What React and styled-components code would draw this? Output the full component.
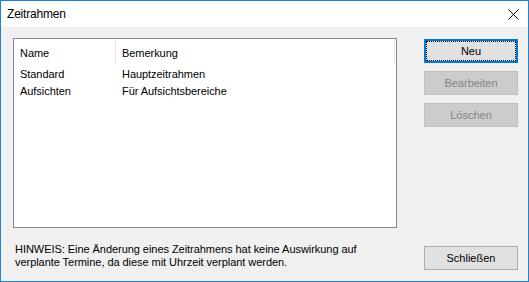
import styled, { createGlobalStyle } from "styled-components";

const GlobalStyle = createGlobalStyle`
  html, body {
    margin: 0;
    padding: 0;
    background: #ffffff;
  }
  * {
    box-sizing: border-box;
  }
`;

const rows = [
  { name: "Standard", note: "Hauptzeitrahmen" },
  { name: "Aufsichten", note: "Für Aufsichtsbereiche" },
];

export default function App() {
  return (
    <>
      <GlobalStyle />
      <Window>
        <TitleBar>
          <Title>Zeitrahmen</Title>
          <CloseButton aria-label="Schließen">
            <svg width="11" height="11" viewBox="0 0 11 11">
              <path d="M0.5 0.5 L10.5 10.5 M10.5 0.5 L0.5 10.5" stroke="#000" strokeWidth="1" />
            </svg>
          </CloseButton>
        </TitleBar>
        <Body>
          <MainRow>
            <ListBox>
              <HeaderRow>
                <HeaderCell $width={102}>Name</HeaderCell>
                <HeaderCell $width={276}>Bemerkung</HeaderCell>
              </HeaderRow>
              {rows.map((row) => (
                <ItemRow key={row.name}>
                  <Cell $width={102}>{row.name}</Cell>
                  <Cell $width={276}>{row.note}</Cell>
                </ItemRow>
              ))}
            </ListBox>
            <ButtonColumn>
              <Button $focused>
                <FocusRect>Neu</FocusRect>
              </Button>
              <Button disabled>Bearbeiten</Button>
              <Button disabled>Löschen</Button>
            </ButtonColumn>
          </MainRow>
          <FooterRow>
            <Hint>
              HINWEIS: Eine Änderung eines Zeitrahmens hat keine Auswirkung auf
              <br />
              verplante Termine, da diese mit Uhrzeit verplant werden.
            </Hint>
            <Button>Schließen</Button>
          </FooterRow>
        </Body>
      </Window>
    </>
  );
}

const Window = styled.div`
  width: 529px;
  height: 282px;
  border: 1px solid #1883d7;
  background: #f0f0f0;
  display: flex;
  flex-direction: column;
  font-family: "Liberation Sans", Arial, sans-serif;
  font-size: 11px;
  letter-spacing: -0.05px;
  color: #000000;
`;

const TitleBar = styled.div`
  height: 26px;
  background: #ffffff;
  display: flex;
  align-items: center;
  justify-content: space-between;
  padding: 0 0 0 6px;
`;

const Title = styled.span`
  font-size: 12px;
  letter-spacing: -0.2px;
  color: #000000;
`;

const CloseButton = styled.div`
  width: 30px;
  height: 26px;
  display: flex;
  align-items: center;
  justify-content: center;
`;

const Body = styled.div`
  flex: 1;
  display: flex;
  flex-direction: column;
  padding: 11px 10px 0 12px;
`;

const MainRow = styled.div`
  display: flex;
  align-items: flex-start;
  gap: 27px;
`;

const ListBox = styled.div`
  width: 384px;
  height: 190px;
  background: #ffffff;
  border: 1px solid #828790;
`;

const HeaderRow = styled.div`
  display: flex;
  height: 25px;
  padding-top: 1px;
  margin-bottom: 1px;
  position: relative;

  &::after {
    content: "";
    position: absolute;
    right: 1px;
    top: 1px;
    width: 1px;
    height: 24px;
    background: #e5e5e5;
  }
`;

const HeaderCell = styled.div`
  width: ${(p) => p.$width}px;
  display: flex;
  align-items: center;
  padding-left: 6px;
  padding-top: 2px;
  border-right: 1px solid #e5e5e5;
  &:last-child {
    border-right: none;
  }
`;

const ItemRow = styled.div`
  display: flex;
  height: 17px;
  align-items: center;
`;

const Cell = styled.div`
  width: ${(p) => p.$width}px;
  padding-left: 6px;
  white-space: nowrap;
`;

const ButtonColumn = styled.div`
  display: flex;
  flex-direction: column;
  gap: 8px;
  padding-top: 1px;
`;

const Button = styled.button`
  width: 94px;
  height: 24px;
  padding: 0;
  font-family: "Liberation Sans", Arial, sans-serif;
  font-size: 11px;
  display: flex;
  align-items: center;
  justify-content: center;
  background: ${(p) => (p.disabled ? "#cccccc" : "#e1e1e1")};
  color: ${(p) => (p.disabled ? "#838383" : "#000000")};
  border: ${(p) =>
    p.$focused ? "2px solid #0078d7" : p.disabled ? "1px solid #bfbfbf" : "1px solid #adadad"};
`;

const FocusRect = styled.span`
  width: 100%;
  height: 100%;
  display: flex;
  align-items: center;
  justify-content: center;
  border: 1px dotted #000000;
`;

const FooterRow = styled.div`
  display: flex;
  justify-content: space-between;
  align-items: flex-start;
  margin-top: 18px;
`;

const Hint = styled.div`
  padding-left: 2px;
  margin-top: -3px;
  line-height: 13px;
`;
